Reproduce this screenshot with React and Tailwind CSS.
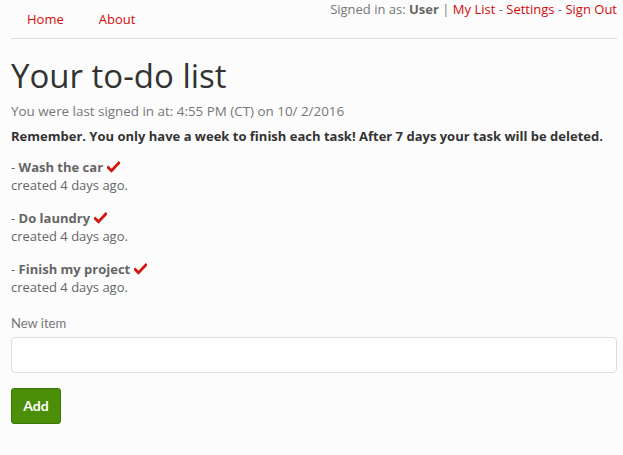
import React from "react";

const tasks = ["Wash the car", "Do laundry", "Finish my project"];

const Check = () => (
  <svg viewBox="0 0 16 14" className="inline-block w-[13px] h-[12px] ml-[4px] -mt-[3px] align-middle">
    <path d="M1.5 7.5 L5.5 11.5 L14.5 2" fill="none" stroke="#d0160f" strokeWidth="3.4" strokeLinecap="square" />
  </svg>
);

export default function App() {
  return (
    <div className="min-h-screen bg-[#fcfcfc] text-[#555] pl-[11px] pr-[6px] text-[13px]" style={{ fontFamily: '"Open Sans", sans-serif' }}>
      <div className="flex justify-between border-b border-[#dddddd] h-[39px]">
        <div className="flex gap-[35px] pl-[16px] pt-[10px] text-[#d40b0b]">
          <a>Home</a>
          <a>About</a>
        </div>
        <div className="text-[#777]">
          Signed in as: <b className="text-[#666]">User</b> |{" "}
          <a className="text-[#d40b0b]">My List</a> -{" "}
          <a className="text-[#d40b0b]">Settings</a> -{" "}
          <a className="text-[#d40b0b]">Sign Out</a>
        </div>
      </div>

      <h1 className="text-[33px] leading-[40px] text-[#333] mt-[17px] mb-[5px]">Your to-do list</h1>
      <p className="text-[#777] leading-[20px] text-[13.4px]">You were last signed in at: 4:55 PM (CT) on 10/ 2/2016</p>
      <p className="font-bold text-[#333] leading-[20px] mt-[5px]">
        Remember. You only have a week to finish each task! After 7 days your task will be deleted.
      </p>

      <ul className="mt-[12px]">
        {tasks.map((t) => (
          <li key={t} className="mb-[15px] leading-[18px] text-[#666]">
            <div>
              - <b>{t}</b>
              <Check />
            </div>
            <div>created 4 days ago.</div>
          </li>
        ))}
      </ul>

      <div className="mt-[18px]" style={{ fontFamily: "Lato, sans-serif" }}>
        <label className="block text-[#777] text-[13px] mb-[3px]">New item</label>
        <input className="w-full h-[36px] bg-white border border-[#ddd] rounded-[4px]" />
        <button className="mt-[15px] w-[50px] h-[36px] rounded-[3px] bg-[#4b8f08] border border-[#3d7506] text-white font-bold text-[14px]">
          Add
        </button>
      </div>
    </div>
  );
}
